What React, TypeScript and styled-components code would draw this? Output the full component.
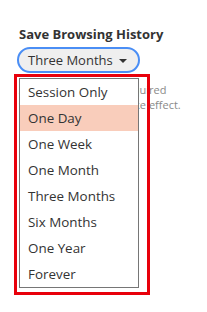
import React from 'react';
import styled, { createGlobalStyle } from 'styled-components';

const GlobalStyle = createGlobalStyle`
  body {
    margin: 0;
    background: #ffffff;
    font-family: "Open Sans", "Noto Sans", sans-serif;
  }
`;

const Page = styled.div`
  width: 207px;
  height: 312px;
  padding: 26px 0 0 17px;
  box-sizing: border-box;
  position: relative;
`;

const Title = styled.div`
  font-size: 13px;
  font-weight: 700;
  color: #333333;
  line-height: 16px;
  margin-left: 2px;
  margin-bottom: 5px;
`;

const SelectWrap = styled.div`
  position: relative;
  display: inline-block;
`;

const SelectButton = styled.div`
  display: inline-flex;
  align-items: center;
  gap: 6px;
  width: 123px;
  height: 26px;
  box-sizing: border-box;
  padding: 0 0 0 9px;
  border: 2px solid #4a8ef5;
  border-radius: 14px;
  background: #efefef;
  font-size: 13px;
  color: #333333;
`;

const Caret = styled.span`
  width: 0;
  height: 0;
  border-left: 4px solid transparent;
  border-right: 4px solid transparent;
  border-top: 4px solid #333333;
  margin-top: 1px;
`;

const Note = styled.p`
  margin: 9px 0 0 2px;
  width: 180px;
  font-size: 11px;
  line-height: 15px;
  color: #8a8a8a;
`;

const Highlight = styled.div`
  position: absolute;
  left: -3px;
  top: 27px;
  border: 3px solid #e8000b;
  padding: 1px 8px 4px 2px;
  z-index: 2;
`;

const List = styled.ul`
  list-style: none;
  margin: 0;
  padding: 0;
  width: 120px;
  box-sizing: border-box;
  border: 1px solid #767676;
  background: #ffffff;
`;

const Item = styled.li<{ $active?: boolean }>`
  height: 26px;
  display: flex;
  align-items: center;
  padding-left: 8px;
  font-size: 13.4px;
  color: #333333;
  background: ${(p) => (p.$active ? '#f9cdbb' : 'transparent')};
`;

const options = [
  'Session Only',
  'One Day',
  'One Week',
  'One Month',
  'Three Months',
  'Six Months',
  'One Year',
  'Forever',
];

const App: React.FC = () => {
  return (
    <>
      <GlobalStyle />
      <Page>
        <Title>Save Browsing History</Title>
        <SelectWrap>
          <SelectButton>
            Three Months
            <Caret />
          </SelectButton>
          <Highlight>
            <List>
              {options.map((o) => (
                <Item key={o} $active={o === 'One Day'}>
                  {o}
                </Item>
              ))}
            </List>
          </Highlight>
        </SelectWrap>
        <Note>
          A browser restart is required
          <br />
          for these settings to take effect.
        </Note>
      </Page>
    </>
  );
};

export default App;
